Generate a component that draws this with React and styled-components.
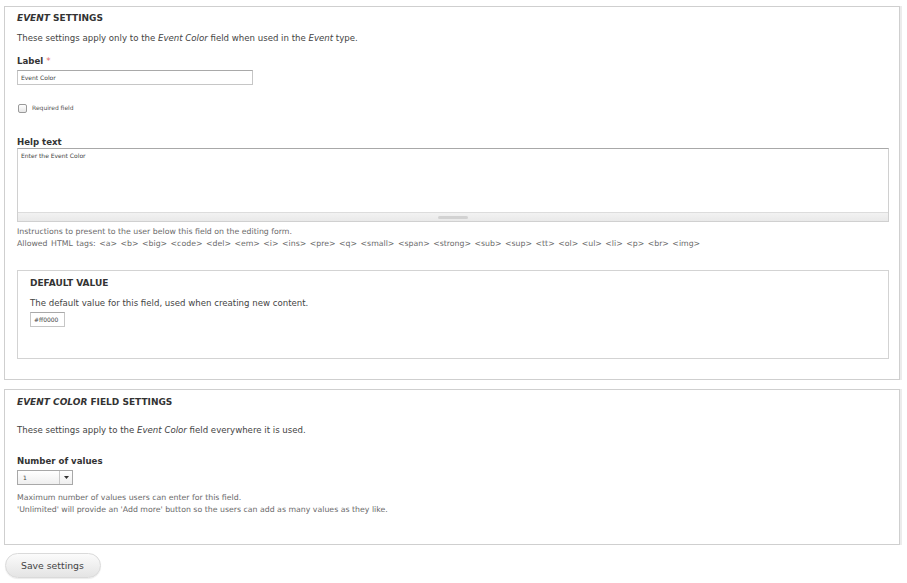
import React from "react";
import styled, { createGlobalStyle } from "styled-components";

const GlobalStyle = createGlobalStyle`
  html, body {
    margin: 0;
    padding: 0;
    background: #fff;
  }
  body {
    font-family: "DejaVu Sans", Verdana, sans-serif;
    color: #3b3b3b;
  }
`;

function App() {
  return (
    <Page>
      <GlobalStyle />
      <Panel top="5px">
        <Title>
          <em>Event</em> settings
        </Title>
        <Description>
          These settings apply only to the <em>Event Color</em> field when used in the <em>Event</em> type.
        </Description>
        <FieldLabel>
          Label <Required>*</Required>
        </FieldLabel>
        <TextInput width="236px">Event Color</TextInput>
        <CheckRow>
          <CheckBox />
          <SmallText>Required field</SmallText>
        </CheckRow>
        <FieldLabel top="23px">Help text</FieldLabel>
        <TextArea>
          <AreaBody>Enter the Event Color</AreaBody>
          <Grippie>
            <GripHandle />
          </Grippie>
        </TextArea>
        <HelpText top="4px">
          Instructions to present to the user below this field on the editing form.
          <br />
          <TagList>
            Allowed HTML tags: &lt;a&gt; &lt;b&gt; &lt;big&gt; &lt;code&gt; &lt;del&gt; &lt;em&gt; &lt;i&gt; &lt;ins&gt; &lt;pre&gt; &lt;q&gt; &lt;small&gt; &lt;span&gt; &lt;strong&gt; &lt;sub&gt; &lt;sup&gt; &lt;tt&gt; &lt;ol&gt; &lt;ul&gt; &lt;li&gt; &lt;p&gt; &lt;br&gt; &lt;img&gt;
          </TagList>
        </HelpText>
        <InnerPanel>
          <Title>Default value</Title>
          <Description>The default value for this field, used when creating new content.</Description>
          <TextInput width="35px">#ff0000</TextInput>
        </InnerPanel>
      </Panel>

      <Panel top="6px" bottom="28px">
        <Title>
          <em>Event Color</em> field settings
        </Title>
        <Description top="16px">
          These settings apply to the <em>Event Color</em> field everywhere it is used.
        </Description>
        <FieldLabel top="19px">Number of values</FieldLabel>
        <Select>
          <SelectValue>1</SelectValue>
          <SelectArrow>
            <svg width="5" height="3" viewBox="0 0 5 3">
              <path d="M0 0 H5 L2.5 3 Z" fill="#333" />
            </svg>
          </SelectArrow>
        </Select>
        <HelpText top="7px">
          Maximum number of values users can enter for this field.
          <br />
          'Unlimited' will provide an 'Add more' button so the users can add as many values as they like.
        </HelpText>
      </Panel>

      <SaveButton>Save settings</SaveButton>
    </Page>
  );
}

export default App;

const Page = styled.div`
  width: 907px;
  height: 583px;
  padding: 6px 7px 0 4px;
  box-sizing: border-box;
  overflow: hidden;
`;

const Panel = styled.div`
  border: 1px solid #cfcfcf;
  box-shadow: 2px 0 0 #ececec;
  padding: ${(p) => p.top || "6px"} 10px ${(p) => p.bottom || "20px"} 12px;
  margin-bottom: 9px;
  background: #fff;
`;

const Title = styled.div`
  font-size: 9px;
  font-weight: bold;
  text-transform: uppercase;
  color: #333;
  line-height: 12px;

  em {
    font-style: italic;
  }
`;

const Description = styled.div`
  margin-top: ${(p) => p.top || "8px"};
  font-size: 8.6px;
  line-height: 12px;
  color: #444;
`;

const FieldLabel = styled.div`
  margin-top: ${(p) => p.top || "11px"};
  font-size: 8.6px;
  font-weight: bold;
  line-height: 12px;
  color: #333;
`;

const Required = styled.span`
  color: #e06a6a;
  font-weight: normal;
`;

const TextInput = styled.div`
  width: ${(p) => p.width};
  height: 15px;
  margin-top: 3px;
  box-sizing: border-box;
  border: 1px solid #c6c6c6;
  border-top-color: #a9a9a9;
  padding: 0 3px;
  font-size: 6px;
  line-height: 13px;
  color: #444;
  background: #fff;
`;

const CheckRow = styled.div`
  display: flex;
  align-items: center;
  gap: 5px;
  margin-top: 18px;
  margin-left: 1px;
`;

const CheckBox = styled.div`
  width: 7px;
  height: 7px;
  border: 1px solid #9a9a9a;
  border-radius: 2px;
  background: linear-gradient(#fff, #e6e6e6);
`;

const SmallText = styled.span`
  font-size: 6px;
  line-height: 10px;
  color: #555;
`;

const TextArea = styled.div`
  margin-top: 0;
  border: 1px solid #d0d0d0;
  border-top-color: #a8a8a8;
`;

const AreaBody = styled.div`
  height: 63px;
  padding: 2px 3px;
  box-sizing: border-box;
  font-size: 6px;
  line-height: 9px;
  color: #444;
`;

const Grippie = styled.div`
  height: 8px;
  border-top: 1px solid #dcdcdc;
  background: linear-gradient(#f2f2f2, #e9e9e9);
  display: flex;
  justify-content: center;
  align-items: center;
`;

const GripHandle = styled.div`
  width: 30px;
  height: 3px;
  border-radius: 2px;
  background: #d2d2d2;
`;

const HelpText = styled.div`
  margin-top: ${(p) => p.top};
  font-size: 7.8px;
  line-height: 12px;
  color: #6a6a6a;
`;

const TagList = styled.span`
  word-spacing: 1px;
`;

const InnerPanel = styled.div`
  margin-top: 20px;
  border: 1px solid #d3d3d3;
  padding: 6px 12px 31px;
`;

const Select = styled.div`
  display: flex;
  width: 56px;
  height: 15px;
  margin-top: 3px;
  box-sizing: border-box;
  border: 1px solid #a8a8a8;
  background: linear-gradient(#fff, #efefef);
`;

const SelectValue = styled.div`
  flex: 1;
  padding-left: 5px;
  font-size: 6px;
  line-height: 13px;
  color: #444;
`;

const SelectArrow = styled.div`
  width: 12px;
  border-left: 1px solid #c8c8c8;
  display: flex;
  align-items: center;
  justify-content: center;
`;

const SaveButton = styled.button`
  display: block;
  margin: -1px 0 0 1px;
  width: 96px;
  height: 25px;
  border: 1px solid #dadada;
  border-radius: 13px;
  background: linear-gradient(#fbfbfb, #e4e4e4);
  box-shadow: 0 1px 1px rgba(0, 0, 0, 0.08);
  font-family: "DejaVu Sans", Verdana, sans-serif;
  font-size: 9.3px;
  color: #444;
  text-align: left;
  padding-left: 15px;
`;
